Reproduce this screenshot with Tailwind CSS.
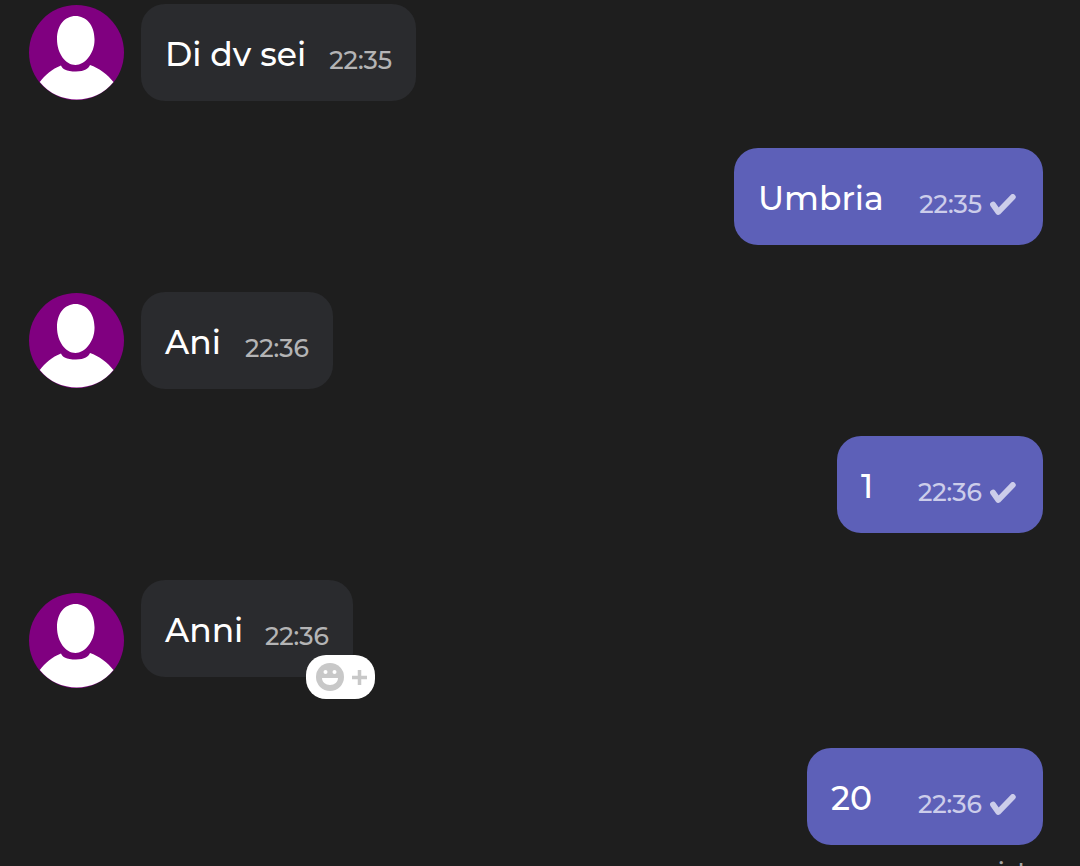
<!DOCTYPE html>
<html lang="it">
    <head>
        <meta charset="UTF-8" />
        <meta name="viewport" content="width=device-width, initial-scale=1.0" />
        <title>Chat</title>
        <script src="https://cdn.jsdelivr.net/npm/@tailwindcss/browser@4"></script>
    </head>
    <body class="bg-[#1e1e1e]">
        <!-- shared icons -->
        <svg class="hidden" aria-hidden="true">
            <symbol id="avatar" viewBox="0 0 95 95">
                <circle cx="47.5" cy="47.5" r="47.5" fill="#800080" />
                <path
                    fill="#fff"
                    d="M46.5 11C57 11 65.500 20 65.500 34C66 48 56 60 46.500 60C37 60 28 49 28 34C28 20 36 11 46.500 11ZM32 60.500C33.500 64 37 66.500 47 66.500C56 66.500 59.500 63.500 61 60C70 63 79 70 84.500 77A47.500 47.500 0 0 1 10.800 77C16 70 23 64 32 60.500Z"
                />
            </symbol>
            <symbol id="check" viewBox="0 0 26 22">
                <path
                    d="M3 10.500L8.300 18L22.800 3"
                    fill="none"
                    stroke="currentColor"
                    stroke-width="5.800"
                    stroke-linecap="round"
                    stroke-linejoin="round"
                />
            </symbol>
        </svg>

        <main
            class="h-screen w-full overflow-hidden bg-[#1e1e1e] pt-1 pl-[29px] pr-[37px] text-white text-[33px] font-medium font-['Montserrat','Lato',sans-serif]"
        >
            <div class="flex flex-col gap-[47px]">
                <div class="flex items-start gap-[17px]">
                    <svg class="mt-px size-[95px] shrink-0"><use href="#avatar" /></svg>
                    <div class="flex h-[97px] min-w-[275px] items-center justify-between rounded-3xl bg-[#2a2b2e] px-6 pt-1">
                        <p>Di dv sei</p>
                        <time class="pt-3 text-[25px] text-[#b4b4b5]">22:35</time>
                    </div>
                </div>

                <div class="flex h-[97px] min-w-[309px] items-center justify-between self-end rounded-3xl bg-[#5d60b8] px-6 pt-1">
                    <p>Umbria</p>
                    <div class="flex items-center gap-2 pt-3 text-[25px] text-[#cccdea]">
                        <time>22:35</time>
                        <svg class="mr-[3px] h-[22px] w-[26px]"><use href="#check" /></svg>
                    </div>
                </div>

                <div class="flex items-start gap-[17px]">
                    <svg class="mt-px size-[95px] shrink-0"><use href="#avatar" /></svg>
                    <div class="flex h-[97px] min-w-[192px] items-center justify-between rounded-3xl bg-[#2a2b2e] px-6 pt-1">
                        <p>Ani</p>
                        <time class="pt-3 text-[25px] text-[#b4b4b5]">22:36</time>
                    </div>
                </div>

                <div class="flex h-[97px] min-w-[206px] items-center justify-between self-end rounded-3xl bg-[#5d60b8] px-6 pt-1">
                    <p>1</p>
                    <div class="flex items-center gap-2 pt-3 text-[25px] text-[#cccdea]">
                        <time>22:36</time>
                        <svg class="mr-[3px] h-[22px] w-[26px]"><use href="#check" /></svg>
                    </div>
                </div>

                <div class="mb-[13px] flex items-start gap-[17px]">
                    <svg class="mt-[13px] size-[95px] shrink-0"><use href="#avatar" /></svg>
                    <div class="relative flex h-[97px] min-w-[212px] items-center justify-between rounded-3xl bg-[#2a2b2e] px-6 pt-1">
                        <p>Anni</p>
                        <time class="pt-3 text-[25px] text-[#b4b4b5]">22:36</time>
                        <button
                            type="button"
                            aria-label="Aggiungi reazione"
                            class="absolute -right-[22px] -bottom-[22px] flex h-11 w-[69px] items-center justify-between rounded-[20px] bg-white pr-2 pl-2.5 text-[#c8c8c8]"
                        >
                            <svg class="size-7" viewBox="0 0 28 28">
                                <circle cx="14" cy="14" r="14" fill="currentColor" />
                                <circle cx="9.500" cy="9" r="2" fill="#fff" />
                                <circle cx="18.500" cy="9" r="2" fill="#fff" />
                                <path d="M6 15H22C22 19 18.500 22 14 22S6 19 6 15Z" fill="#fff" />
                            </svg>
                            <svg class="size-[15px]" viewBox="0 0 15 15">
                                <path d="M7.500 0V15M0 7.500H15" stroke="currentColor" stroke-width="3.500" />
                            </svg>
                        </button>
                    </div>
                </div>

                <div class="flex flex-col items-end gap-2">
                    <div class="flex h-[97px] min-w-[236px] items-center justify-between rounded-3xl bg-[#5d60b8] px-6 pt-1">
                        <p>20</p>
                        <div class="flex items-center gap-2 pt-3 text-[25px] text-[#cccdea]">
                            <time>22:36</time>
                            <svg class="mr-[3px] h-[22px] w-[26px]"><use href="#check" /></svg>
                        </div>
                    </div>
                    <p class="text-[25px] text-[#a5a5a5]">visto</p>
                </div>
            </div>
        </main>
    </body>
</html>
